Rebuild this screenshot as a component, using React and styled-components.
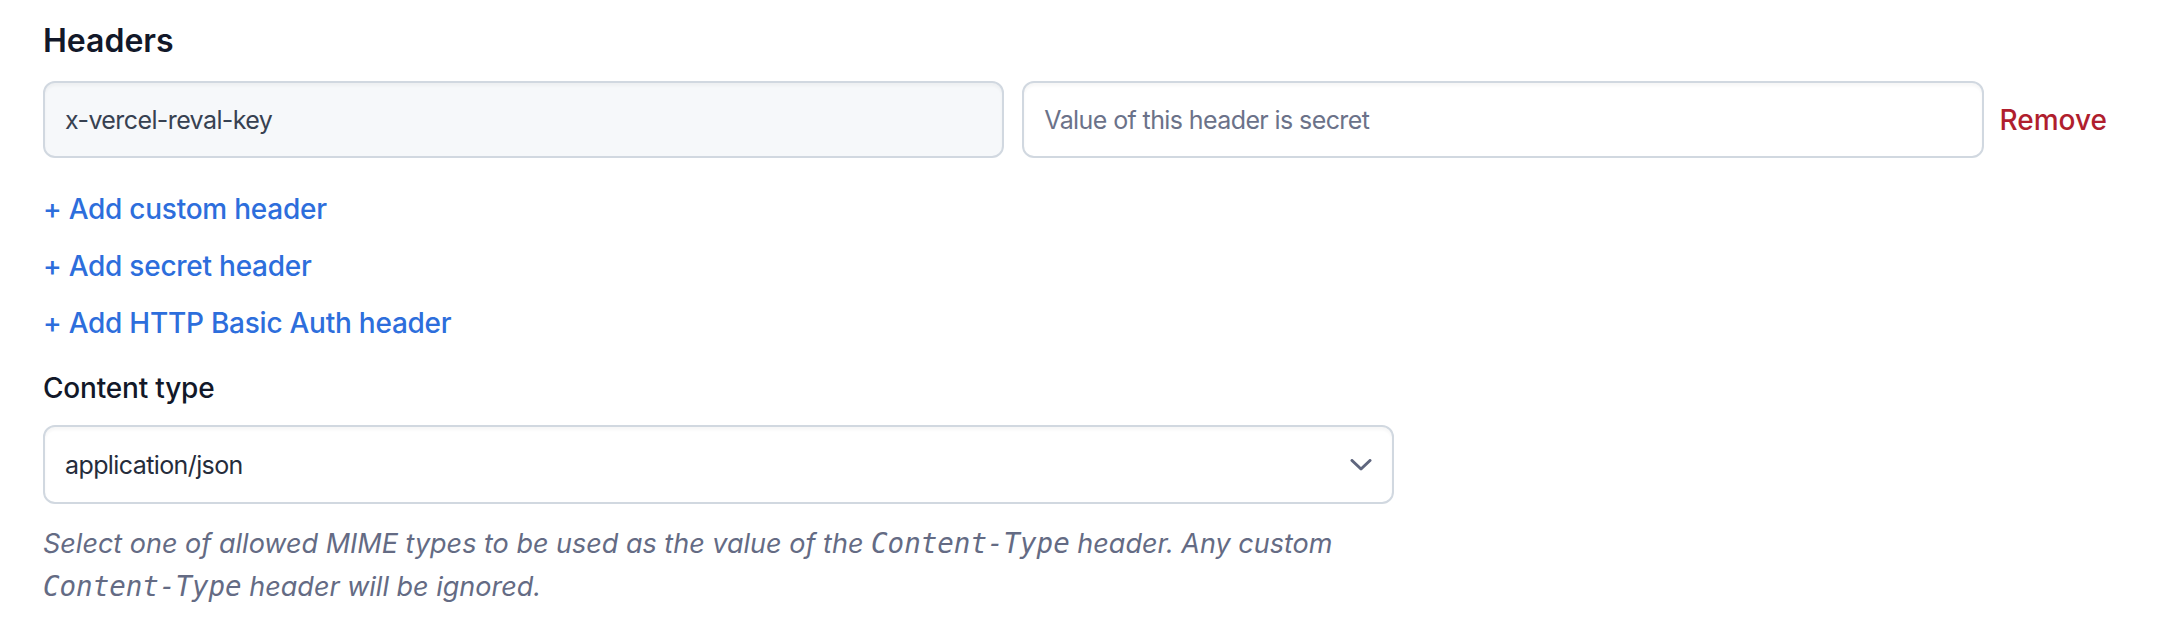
import React from "react";
import styled, { createGlobalStyle } from "styled-components";

const GlobalStyle = createGlobalStyle`
  body {
    margin: 0;
    background: #ffffff;
    font-family: Inter, "Noto Sans", sans-serif;
    color: #111827;
  }
`;

const Page = styled.div`
  padding: 17px 43px 40px 43px;
  display: flex;
  flex-direction: column;
`;

const SectionTitle = styled.h2`
  margin: 0;
  font-size: 32px;
  line-height: 48px;
  font-weight: 600;
  color: #121829;
`;

const HeaderRow = styled.div`
  display: flex;
  align-items: center;
  gap: 18px;
  margin-top: 16px;
  width: 2064px;
`;

const TextInput = styled.input`
  flex: 1;
  min-width: 0;
  height: 77px;
  box-sizing: border-box;
  padding: 0 20px;
  border: 2px solid #d1d8e0;
  border-radius: 12px;
  background: ${(p) => (p.readOnly ? "#f6f8fa" : "#ffffff")};
  box-shadow: inset 0 3px 3px rgba(15, 23, 42, 0.035);
  font-family: Inter, "Noto Sans", sans-serif;
  font-size: 25px;
  letter-spacing: -0.6px;
  color: #374151;
  outline: none;

  &::placeholder {
    color: #6b7289;
    opacity: 1;
  }
`;

const RemoveButton = styled.button`
  border: none;
  background: none;
  padding: 0;
  margin-left: -2px;
  font-family: Inter, "Noto Sans", sans-serif;
  font-size: 28px;
  font-weight: 500;
  color: #b01e2e;
  cursor: pointer;
`;

const LinkList = styled.div`
  display: flex;
  flex-direction: column;
  align-items: flex-start;
  gap: 17px;
  margin-top: 31px;
`;

const AddLink = styled.button`
  border: none;
  background: none;
  padding: 0;
  font-family: Inter, "Noto Sans", sans-serif;
  font-size: 28px;
  line-height: 40px;
  letter-spacing: -0.25px;
  font-weight: 500;
  color: #2d6edc;
  cursor: pointer;
`;

const Field = styled.div`
  display: flex;
  flex-direction: column;
  width: 1351px;
  margin-top: 25px;
`;

const Label = styled.label`
  font-size: 28px;
  line-height: 40px;
  letter-spacing: -0.2px;
  font-weight: 500;
  color: #121829;
`;

const SelectWrap = styled.div`
  position: relative;
  margin-top: 17px;
`;

const Select = styled.select`
  appearance: none;
  width: 100%;
  height: 79px;
  box-sizing: border-box;
  padding: 0 60px 0 20px;
  border: 2px solid #d1d8e0;
  border-radius: 12px;
  background: #ffffff;
  box-shadow: inset 0 3px 3px rgba(15, 23, 42, 0.035);
  font-family: Inter, "Noto Sans", sans-serif;
  font-size: 25px;
  letter-spacing: -0.6px;
  color: #252c3b;
  outline: none;
`;

const Chevron = styled.svg`
  position: absolute;
  right: 22px;
  top: 50%;
  transform: translateY(-50%);
  pointer-events: none;
`;

const Help = styled.p`
  margin: 18px 0 0 0;
  font-size: 27px;
  line-height: 42px;
  font-style: italic;
  color: #646b84;
`;

const Code = styled.code`
  font-family: "DejaVu Sans Mono", "Liberation Mono", monospace;
  font-size: 27.5px;
  font-style: italic;
`;

export default function App() {
  return (
    <>
      <GlobalStyle />
      <Page>
        <SectionTitle>Headers</SectionTitle>
        <HeaderRow>
          <TextInput readOnly value="x-vercel-reval-key" />
          <TextInput placeholder="Value of this header is secret" />
          <RemoveButton>Remove</RemoveButton>
        </HeaderRow>
        <LinkList>
          <AddLink>+ Add custom header</AddLink>
          <AddLink>+ Add secret header</AddLink>
          <AddLink>+ Add HTTP Basic Auth header</AddLink>
        </LinkList>
        <Field>
          <Label>Content type</Label>
          <SelectWrap>
            <Select defaultValue="application/json">
              <option>application/json</option>
              <option>application/x-www-form-urlencoded</option>
              <option>text/plain</option>
            </Select>
            <Chevron width="22" height="12" viewBox="0 0 22 12" fill="none">
              <path
                d="M2 1.5 L11 10 L20 1.5"
                stroke="#5f667e"
                strokeWidth="3"
                strokeLinecap="round"
                strokeLinejoin="round"
              />
            </Chevron>
          </SelectWrap>
          <Help>
            Select one of allowed MIME types to be used as the value of the{" "}
            <Code>Content-Type</Code> header. Any custom <Code>Content-Type</Code>{" "}
            header will be ignored.
          </Help>
        </Field>
      </Page>
    </>
  );
}
